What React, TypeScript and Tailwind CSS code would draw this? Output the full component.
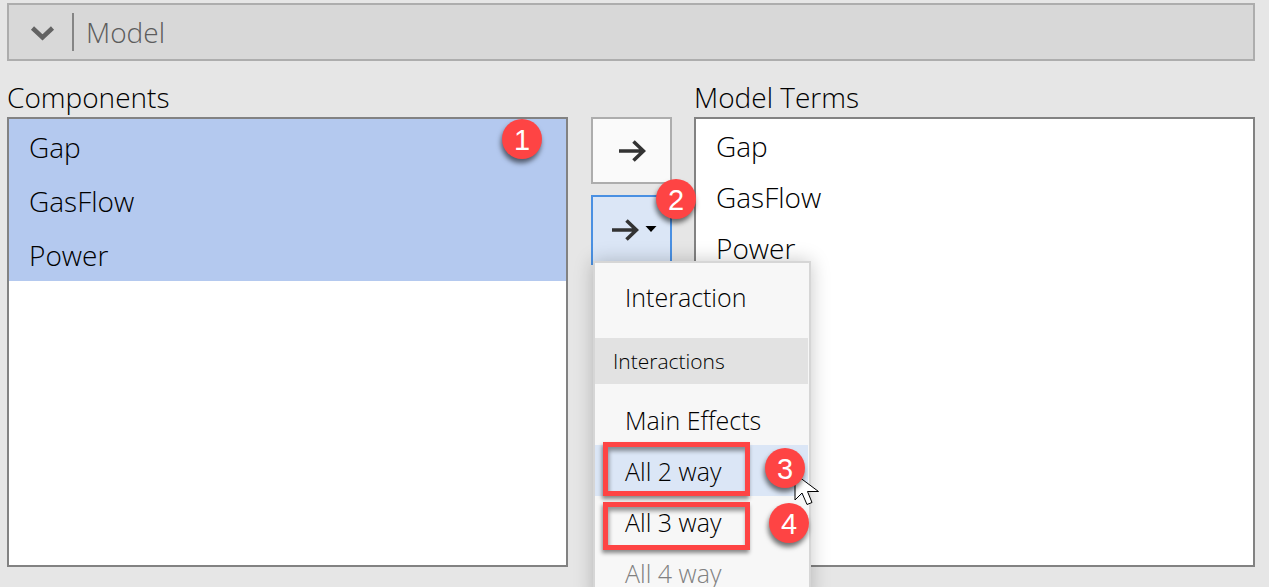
import { useState, type ReactNode } from 'react';

const factors = ['Gap', 'GasFlow', 'Power'];

function Badge({ children, className }: { children: ReactNode; className: string }) {
  return (
    <span
      className={`absolute z-20 flex size-10 items-center justify-center rounded-full bg-[#fe4444] pt-0.5 font-['Liberation_Sans',sans-serif] text-[29px] leading-[38px] font-normal text-white shadow-[-1px_4px_5px_rgba(0,0,0,0.55)] ${className}`}
    >
      {children}
    </span>
  );
}

function Arrow() {
  return (
    <svg width="28" height="24" viewBox="0 0 28 24" fill="none" stroke="#333" strokeWidth="3.6" aria-hidden="true">
      <path d="M1 12H26M15.500 2.500L25.500 12L15.500 21.500" />
    </svg>
  );
}

function Highlight({ className }: { className: string }) {
  return (
    <span
      className={`pointer-events-none absolute left-2 z-10 w-[147px] border-[5px] border-[#fe4444] shadow-[-1px_3px_4px_rgba(0,0,0,0.45),inset_1px_4px_4px_rgba(0,0,0,0.4)] ${className}`}
    />
  );
}

function Cursor() {
  return (
    <svg className="absolute top-[28px] left-[199px] z-10" width="27" height="36" viewBox="0 0 27 36" aria-hidden="true">
      <path
        d="M1 1V27L8 20L13 31.500L18 29.500L13.500 18.500H24.500Z"
        fill="#fff"
        stroke="#000"
        strokeWidth="1"
      />
    </svg>
  );
}

const menuItem = 'block h-[51px] w-full pt-0.5 pl-[30px] text-left text-[25px] leading-[49px] whitespace-nowrap';

export default function App() {
  const [open, setOpen] = useState(true);

  return (
    <main className="h-screen overflow-hidden bg-[#e6e6e6] pt-[3px] pr-3.5 pl-[7px] font-['Open_Sans','Noto_Sans',sans-serif] text-[28px] font-[350] text-black">
      <button
        type="button"
        className="flex h-[58px] w-full items-center border-2 border-[#adadad] bg-[#d8d8d8] pl-[21px] text-[#5c5c5c]"
      >
        <svg width="26" height="22" viewBox="0 0 26 22" fill="none" stroke="#636363" strokeWidth="4.500" aria-hidden="true">
          <path d="M2.500 7L12.500 16.500L22.500 7" />
        </svg>
        <span className="ml-4 h-[38px] w-0.5 bg-[#858585]" />
        <span className="ml-3">Model</span>
      </button>

      <div className="mt-[18px] flex items-start">
        <section className="min-w-0 flex-1">
          <h2 id="components" className="h-[38px] leading-[36px]">Components</h2>
          <div className="relative h-[450px] border-2 border-[#828282] bg-white">
            <ul role="listbox" aria-multiselectable="true" aria-labelledby="components">
              {factors.map((name) => (
                <li key={name} role="option" aria-selected="true" className="h-[54px] bg-[#b4c9ef] pl-5 leading-[56px]">
                  {name}
                </li>
              ))}
            </ul>
            <Badge className="top-0 right-6">1</Badge>
          </div>
        </section>

        <div className="mt-[38px] mr-[22px] ml-[23px] flex w-[81px] flex-col gap-[11px]">
          <button
            type="button"
            aria-label="Add term"
            className="flex h-[67px] items-center justify-center border-2 border-[#adadad] bg-[#fafafa]"
          >
            <Arrow />
          </button>
          <div className="relative">
            <button
              type="button"
              aria-label="Add interactions"
              aria-expanded={open}
              onClick={() => setOpen(!open)}
              className="flex h-[70px] w-full items-center justify-center gap-1.5 border-2 border-[#4a90e2] bg-[#dbe6f6] pl-1"
            >
              <Arrow />
              <svg width="12" height="8" viewBox="0 0 12 8" aria-hidden="true">
                <path d="M0.500 0H11.500L6 6Z" />
              </svg>
            </button>
            <Badge className="-top-4 -right-6">2</Badge>
            {open && (
              <div
                role="menu"
                className="absolute top-[66px] left-0.5 z-10 w-[218px] border-2 border-[#d6d6d6] bg-[#f7f7f7] pt-2 pr-px shadow-[0_0_18px_rgba(0,0,0,0.22)]"
              >
                <button type="button" role="menuitem" className={menuItem}>Interaction</button>
                <div className="mt-4 mb-2.5 h-[46px] bg-[#e2e2e2] pl-[18px] text-[21px] leading-[46px]">Interactions</div>
                <button type="button" role="menuitem" className={menuItem}>Main Effects</button>
                <div className="relative bg-[#dbe6f6]">
                  <button type="button" role="menuitem" className={menuItem}>All 2 way</button>
                  <Highlight className="-top-[3px] h-[54px]" />
                  <Cursor />
                  <Badge className="top-[3px] left-[170px]">3</Badge>
                </div>
                <div className="relative">
                  <button type="button" role="menuitem" className={menuItem}>All 3 way</button>
                  <Highlight className="top-1.5 h-12" />
                  <Badge className="top-[7px] left-[174px]">4</Badge>
                </div>
                <button type="button" role="menuitem" disabled className={`${menuItem} text-[#808080]`}>
                  All 4 way
                </button>
              </div>
            )}
          </div>
        </div>

        <section className="min-w-0 flex-1">
          <h2 id="terms" className="h-[38px] leading-[36px]">Model Terms</h2>
          <ul aria-labelledby="terms" className="h-[450px] border-2 border-[#828282] bg-white">
            {factors.map((name) => (
              <li key={name} className="h-[51px] pl-5 leading-[54px]">
                {name}
              </li>
            ))}
          </ul>
        </section>
      </div>
    </main>
  );
}
